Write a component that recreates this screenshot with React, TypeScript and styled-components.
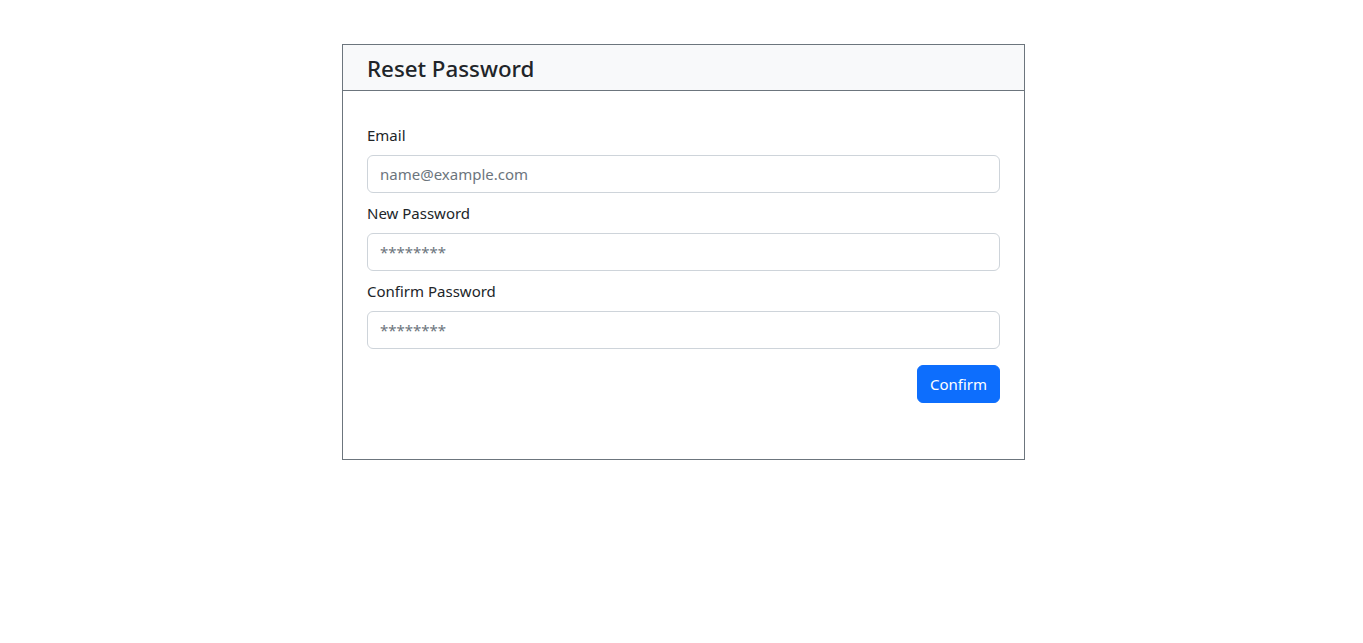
import React from "react";
import styled, { createGlobalStyle } from "styled-components";

const Global = createGlobalStyle`
  html, body { margin: 0; padding: 0; background: #fff; }
  body {
    font-family: "Noto Sans", "Open Sans", sans-serif;
    color: #212529;
    font-size: 15px;
    line-height: 24px;
  }
  * { box-sizing: border-box; }
`;

const Page = styled.div`
  padding-top: 44px;
  padding-left: 342px;
`;

const Card = styled.div`
  width: 683px;
  height: 416px;
  border: 1px solid #6c757d;
  display: flex;
  flex-direction: column;
`;

const Header = styled.div`
  background: #f8f9fa;
  border-bottom: 1px solid #6c757d;
  padding: 9px 24px 7px;
  height: 46px;
  display: flex;
  align-items: center;
`;

const Title = styled.h4`
  margin: 0;
  font-size: 22.3px;
  font-weight: 500;
  line-height: 29px;
`;

const Body = styled.form`
  padding: 32px 24px 0;
  display: flex;
  flex-direction: column;
`;

const Label = styled.label`
  display: block;
  margin-bottom: 8px;
  line-height: 24px;
`;

const Input = styled.input`
  display: block;
  width: 100%;
  height: 38px;
  padding: 6px 12px;
  border: 1px solid #ced4da;
  border-radius: 6px;
  font-family: inherit;
  font-size: 15px;
  color: #212529;
  margin-bottom: 8px;
  &::placeholder { color: #6c757d; }
  outline: none;
`;

const Actions = styled.div`
  display: flex;
  justify-content: flex-end;
  margin-top: 8px;
`;

const Button = styled.button`
  height: 38px;
  padding: 6px 12px;
  border: 1px solid #0d6efd;
  background: #0d6efd;
  color: #fff;
  border-radius: 6px;
  font-family: inherit;
  font-size: 15px;
  width: 83px;
`;

export default function App() {
  return (
    <>
      <Global />
      <Page>
        <Card>
          <Header>
            <Title>Reset Password</Title>
          </Header>
          <Body onSubmit={(e) => e.preventDefault()}>
            <Label htmlFor="email">Email</Label>
            <Input id="email" type="email" placeholder="name@example.com" />
            <Label htmlFor="np">New Password</Label>
            <Input id="np" type="password" placeholder="********" />
            <Label htmlFor="cp">Confirm Password</Label>
            <Input id="cp" type="password" placeholder="********" />
            <Actions>
              <Button type="submit">Confirm</Button>
            </Actions>
          </Body>
        </Card>
      </Page>
    </>
  );
}
